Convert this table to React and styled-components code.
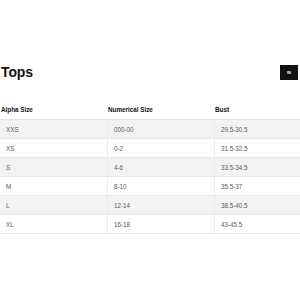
import React from 'react';
import styled, { createGlobalStyle } from 'styled-components';

const GlobalStyle = createGlobalStyle`
  html, body {
    margin: 0;
    padding: 0;
    background: #ffffff;
    font-family: "Liberation Sans", Arial, sans-serif;
  }
`;

const Page = styled.div`
  width: 300px;
  height: 300px;
  padding-top: 64px;
  box-sizing: border-box;
  background: #ffffff;
`;

const TitleRow = styled.div`
  display: flex;
  align-items: center;
  justify-content: space-between;
  height: 16px;
  padding: 0 2px 0 1px;
`;

const Title = styled.h1`
  margin: 0;
  font-size: 14px;
  line-height: 16px;
  font-weight: 700;
  color: #111111;
  letter-spacing: -0.1px;
`;

const UnitButton = styled.div`
  display: flex;
  align-items: center;
  justify-content: center;
  width: 18px;
  height: 15px;
  background: #111111;
  color: #ffffff;
  font-size: 4px;
  font-weight: 700;
`;

const Table = styled.div`
  margin-top: 20px;
  display: grid;
  grid-template-columns: 107px 107px 1fr;
`;

const HeadCell = styled.div`
  height: 19px;
  display: flex;
  align-items: center;
  padding-left: ${p => p.$pad || 1}px;
  border-bottom: 1px solid #e2e2e2;
  font-size: 6.3px;
  font-weight: 700;
  color: #111111;
`;

const Cell = styled.div`
  height: 18px;
  display: flex;
  align-items: center;
  padding-left: 6px;
  background: ${p => (p.$shade ? '#f3f3f3' : '#ffffff')};
  border-bottom: 1px solid #e6e6e6;
  border-left: ${p => (p.$first ? 'none' : '1px solid #ececec')};
  font-size: 6.3px;
  color: #5a5a5a;
`;

const rows = [
  ['XXS', '000-00', '29.5-30.5'],
  ['XS', '0-2', '31.5-32.5'],
  ['S', '4-6', '33.5-34.5'],
  ['M', '8-10', '35.5-37'],
  ['L', '12-14', '38.5-40.5'],
  ['XL', '16-18', '43-45.5'],
];

export default function App() {
  return (
    <Page>
      <GlobalStyle />
      <TitleRow>
        <Title>Tops</Title>
        <UnitButton>IN</UnitButton>
      </TitleRow>
      <Table>
        <HeadCell>Alpha Size</HeadCell>
        <HeadCell>Numerical Size</HeadCell>
        <HeadCell>Bust</HeadCell>
        {rows.map((r, i) =>
          r.map((v, j) => (
            <Cell key={i + '-' + j} $shade={i % 2 === 0} $first={j === 0}>
              {v}
            </Cell>
          ))
        )}
      </Table>
    </Page>
  );
}
